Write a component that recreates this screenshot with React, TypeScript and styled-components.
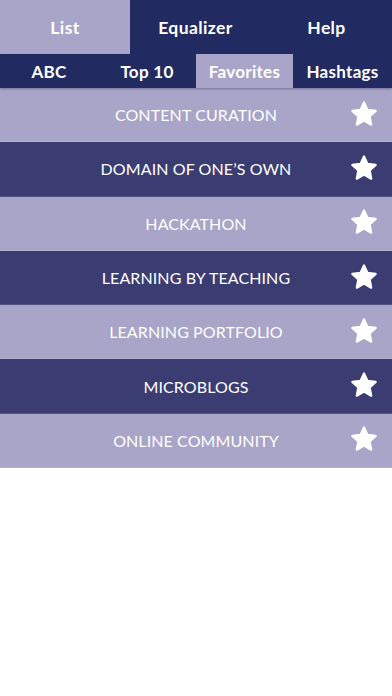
import styled, { createGlobalStyle } from 'styled-components';

const GlobalStyle = createGlobalStyle`
  html, body {
    margin: 0;
    padding: 0;
    background: #ffffff;
  }
  body {
    font-family: Lato, "Open Sans", sans-serif;
  }
`;

const colors = {
  navy: '#222a62',
  light: '#a8a5c8',
  dark: '#3b3d72',
};

const mainTabs = ['List', 'Equalizer', 'Help'];
const subTabs = ['ABC', 'Top 10', 'Favorites', 'Hashtags'];
const favorites = [
  'CONTENT CURATION',
  'DOMAIN OF ONE’S OWN',
  'HACKATHON',
  'LEARNING BY TEACHING',
  'LEARNING PORTFOLIO',
  'MICROBLOGS',
  'ONLINE COMMUNITY',
];

const Star = () => (
  <svg width="30" height="30" viewBox="0 0 24 24">
    <path
      d="M12 2.4l2.8 6 6.55.8-4.84 4.5 1.25 6.5L12 16.95l-5.76 3.25 1.25-6.5-4.84-4.5 6.55-.8z"
      fill="#ffffff"
      stroke="#ffffff"
      strokeWidth="1.8"
      strokeLinejoin="round"
    />
  </svg>
);

const App = () => {
  return (
    <Page>
      <GlobalStyle />
      <MainBar>
        {mainTabs.map((tab) => (
          <MainTab key={tab} $active={tab === 'List'}>
            {tab}
          </MainTab>
        ))}
      </MainBar>
      <SubBar>
        {subTabs.map((tab) => (
          <SubTab key={tab} $active={tab === 'Favorites'}>
            {tab}
          </SubTab>
        ))}
      </SubBar>
      <List>
        {favorites.map((item, i) => (
          <Row key={item} $dark={i % 2 === 1}>
            <RowTitle>{item}</RowTitle>
            <StarButton>
              <Star />
            </StarButton>
          </Row>
        ))}
      </List>
    </Page>
  );
};

const Page = styled.div`
  width: 392px;
  min-height: 696px;
  background: #ffffff;
`;

const MainBar = styled.div`
  display: grid;
  grid-template-columns: 130px 131px 131px;
  height: 54px;
  background: ${colors.navy};
`;

const MainTab = styled.div<{ $active?: boolean }>`
  display: flex;
  align-items: center;
  justify-content: center;

  background: ${({ $active }) => ($active ? colors.light : 'transparent')};
  color: #ffffff;
  font-size: 17.5px;
  font-weight: 700;
  letter-spacing: 0.4px;
`;

const SubBar = styled.div`
  display: grid;
  grid-template-columns: 98px 98px 97px 99px;
  height: 34px;
  background: ${colors.navy};
  box-shadow: 0 1px 2px rgba(20, 20, 60, 0.35);
  position: relative;
  z-index: 1;
`;

const SubTab = styled.div<{ $active?: boolean }>`
  display: flex;
  align-items: center;
  justify-content: center;

  background: ${({ $active }) => ($active ? colors.light : 'transparent')};
  color: #ffffff;
  font-size: 17px;
  font-weight: 700;
  letter-spacing: 0.3px;
  white-space: nowrap;
`;

const List = styled.div`
  display: flex;
  flex-direction: column;
`;

const Row = styled.div<{ $dark?: boolean }>`
  display: flex;
  align-items: center;
  justify-content: center;
  position: relative;

  height: 54.3px;
  background: ${({ $dark }) => ($dark ? colors.dark : colors.light)};
  border-bottom: 1px solid rgba(255, 255, 255, 0.12);
  box-sizing: border-box;
`;

const RowTitle = styled.span`
  color: #ffffff;
  font-size: 16px;
  font-weight: 400;
  letter-spacing: 0.1px;
`;

const StarButton = styled.div`
  position: absolute;
  right: 13px;
  top: 50%;
  transform: translateY(-52%);
  display: flex;
`;

export default App;
